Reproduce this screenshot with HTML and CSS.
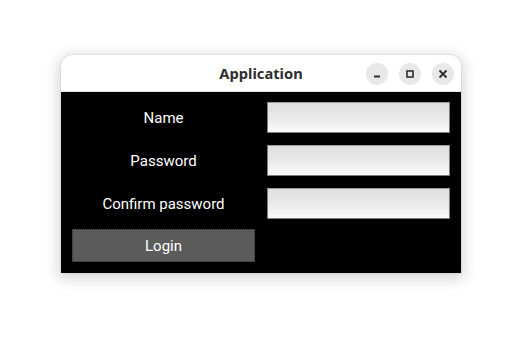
FILE: index.html
```html
<!DOCTYPE html>
<html>
<head>
<meta charset="utf-8">
<link rel="stylesheet" href="styles.css">
</head>
<body>
<div class="page">
  <div class="window">
    <div class="titlebar">
      <div class="title">Application</div>
      <div class="controls">
        <div class="wbtn"><svg width="10" height="10" viewBox="0 0 10 10"><rect x="2" y="6.5" width="6" height="2" fill="#2e2e2e"/></svg></div>
        <div class="wbtn"><svg width="10" height="10" viewBox="0 0 10 10"><rect x="2" y="2" width="6" height="6" fill="none" stroke="#2e2e2e" stroke-width="1.6"/></svg></div>
        <div class="wbtn"><svg width="10" height="10" viewBox="0 0 10 10"><path d="M1.5 1.5 L8.5 8.5 M8.5 1.5 L1.5 8.5" stroke="#2e2e2e" stroke-width="1.8"/></svg></div>
      </div>
    </div>
    <div class="content">
      <div class="label">Name</div>
      <div class="field"></div>
      <div class="label">Password</div>
      <div class="field"></div>
      <div class="label">Confirm password</div>
      <div class="field"></div>
      <div class="login">Login</div>
    </div>
  </div>
</div>
</body>
</html>
```
FILE: styles.css
```css
html, body {
  margin: 0;
  padding: 0;
  background: #ffffff;
}
.page {
  padding: 55px 0 40px 61px;
}
.window {
  width: 400px;
  border-radius: 12px 12px 0 0;
  background: #ffffff;
  box-shadow: 0 3px 14px 3px rgba(0,0,0,0.16), 0 0 0 1px rgba(0,0,0,0.05);
  overflow: hidden;
}
.titlebar {
  height: 36px;
  border-bottom: 1px solid #e4e4e4;
  display: grid;
  grid-template-columns: 1fr auto 1fr;
  align-items: center;
  background: #ffffff;
}
.title {
  grid-column: 2;
  font-family: "Noto Sans", "DejaVu Sans", sans-serif;
  font-weight: bold;
  font-size: 14.7px;
  color: #2e2e2e;
}
.controls {
  grid-column: 3;
  justify-self: end;
  display: flex;
  gap: 11px;
  padding-right: 7px;
  padding-top: 1px;
}
.wbtn {
  width: 22px;
  height: 22px;
  border-radius: 50%;
  background: #e8e8e8;
  display: flex;
  align-items: center;
  justify-content: center;
}
.content {
  background: #000000;
  padding: 10px 11px 11px 11px;
  display: grid;
  grid-template-columns: 183px 183px;
  grid-template-rows: 31px 31px 31px 31px;
  column-gap: 12px;
  row-gap: 12px;
  font-family: Roboto, "Noto Sans", sans-serif;
  font-size: 15px;
}
.label {
  color: #ffffff;
  display: flex;
  align-items: center;
  justify-content: center;
}
.field {
  box-sizing: border-box;
  border: 1px solid #7c7c7c;
  border-top-color: #9a9a9a;
  background: linear-gradient(to bottom, #dedede, #ececec 60%, #fbfbfb);
}
.login {
  margin-top: -2px;
  box-sizing: border-box;
  background: #5b5b5b;
  border: 1px dotted #2a2a2a;
  color: #ffffff;
  display: flex;
  align-items: center;
  justify-content: center;
}
```
